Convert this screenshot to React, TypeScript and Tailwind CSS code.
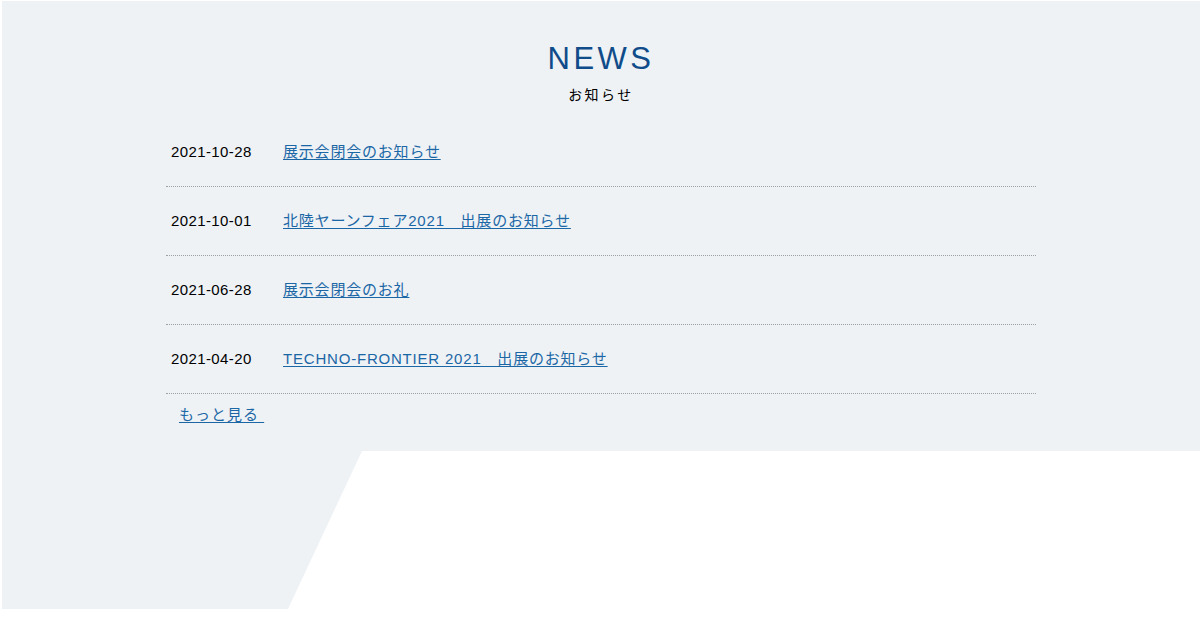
import React from 'react';

type NewsItem = {
  date: string;
  title: string;
};

const items: NewsItem[] = [
  { date: '2021-10-28', title: '展示会閉会のお知らせ' },
  { date: '2021-10-01', title: '北陸ヤーンフェア2021　出展のお知らせ' },
  { date: '2021-06-28', title: '展示会閉会のお礼' },
  { date: '2021-04-20', title: 'TECHNO-FRONTIER 2021　出展のお知らせ' },
];

const font = {
  fontFamily: '"Liberation Sans", Arial, "Noto Sans CJK JP", sans-serif',
};

const App: React.FC = () => {
  return (
    <div className="w-[1200px] h-[632px] bg-white pl-[2px] pt-[1px]" style={font}>
      <section className="bg-[#eef2f5] h-[450px] pt-[40px]">
        <div className="text-center">
          <h2 className="text-[31px] leading-[36px] tracking-[3.5px] text-[#104c8a]">NEWS</h2>
          <p className="mt-[9px] text-[14px] leading-[18px] tracking-[2.5px] text-black">お知らせ</p>
        </div>

        <ul className="w-[870px] ml-[164px] mt-[14px]">
          {items.map((item) => (
            <li
              key={item.date}
              className="flex items-center h-[69px] pl-[5px] border-b border-dotted border-[#9aa0a6] text-[15px] leading-[20px]"
            >
              <span className="w-[112px] tracking-[0.4px] text-black">{item.date}</span>
              <a href="#" className="text-[#1b67a6] tracking-[0.8px] underline underline-offset-[2px]">
                {item.title}
              </a>
            </li>
          ))}
        </ul>

        <div className="ml-[177px] mt-[9px]">
          <a href="#" className="text-[15px] tracking-[1px] text-[#1b67a6] underline underline-offset-[2px]">
            もっと見る&nbsp;
          </a>
        </div>
      </section>

      {/* slanted lower block */}
      <div
        className="bg-[#eef2f5] h-[158px] w-[360px]"
        style={{ clipPath: 'polygon(0 0, 100% 0, 286px 100%, 0 100%)' }}
      />
    </div>
  );
};

export default App;
